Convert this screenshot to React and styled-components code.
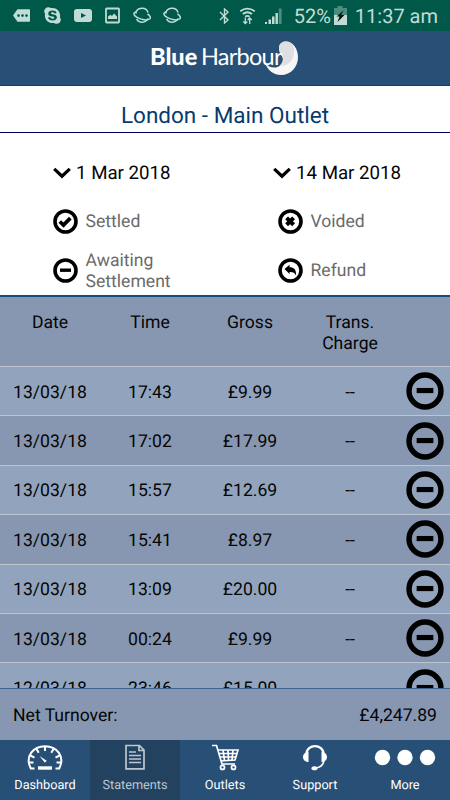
import React from "react";
import styled, { createGlobalStyle } from "styled-components";
import { FaSkype } from "react-icons/fa";

const Global = createGlobalStyle`
  *, *::before, *::after { box-sizing: border-box; }
  body { margin: 0; background: #fff; font-family: Roboto, "Liberation Sans", sans-serif; }
  svg { display: block; flex: none; }
`;

const Screen = styled.div`
  width: 450px;
  height: 800px;
  display: flex;
  flex-direction: column;
  overflow: hidden;
  color: #050505;
  text-rendering: geometricPrecision;
`;

const StatusBar = styled.div`
  height: 31px;
  flex: none;
  background: #005849;
  color: #c0dcd5;
  display: flex;
  align-items: center;
  justify-content: space-between;
  padding: 0 12px 0 13px;
`;

const Notifications = styled.div`
  display: flex;
  align-items: center;
  gap: ${(p) => p.$gap || 0}px;
`;

const StatusText = styled.span`
  font-size: 20px;
  line-height: 31px;
  padding-top: 2px;
  margin-left: ${(p) => p.$left || 0}px;
  white-space: nowrap;
`;

const Brand = styled.header`
  height: 55px;
  flex: none;
  background: #285077;
  border-bottom: 1px solid #153e69;
  display: flex;
  justify-content: center;
  align-items: flex-start;
  color: #fff;
`;

const Logo = styled.div`
  width: 150px;
  height: 54px;
  display: flex;
  padding-top: 10px;
  font-family: Lato, sans-serif;
  font-size: 23.5px;
  line-height: 32px;
  white-space: nowrap;
`;

const LogoBold = styled.span`
  font-weight: 900;
  letter-spacing: 0;
  width: 51px;
`;

const LogoLight = styled.span`
  position: relative;
  z-index: 1;
  letter-spacing: -0.75px;
  width: 75px;
`;

const LogoMark = styled.svg`
  margin: 0 0 0 -12px;
`;

const Title = styled.h1`
  margin: 0;
  height: 47px;
  flex: none;
  border-bottom: 1px solid #00005c;
  color: #063b70;
  font-size: 22.5px;
  font-weight: 400;
  line-height: 61px;
  text-align: center;
`;

const Filters = styled.section`
  height: 162px;
  flex: none;
  display: grid;
  grid-template-columns: 225px 225px;
  grid-template-rows: 64px 49px 49px;
`;

const DatePick = styled.div`
  display: flex;
  align-items: center;
  gap: 5px;
  padding: 15px 0 0 ${(p) => p.$left}px;
  font-size: 18.7px;
  line-height: 22px;
`;

const Legend = styled.div`
  display: flex;
  align-items: center;
  gap: 7.5px;
  padding: 0 0 0 53px;
  color: #6b6b6b;
  font-size: 17.6px;
  line-height: 20.5px;
`;

const LegendText = styled.span`
  max-width: 100px;
  padding-top: 2px;
`;

const Table = styled.section`
  height: 393px;
  flex: none;
  overflow: hidden;
  border-top: 2px solid #154c7b;
  background: #8797b1;
  font-size: 17.6px;
`;

const Row = styled.div`
  display: grid;
  grid-template-columns: 100px 100px 100px 100px 50px;
  height: 49.4px;
  align-items: center;
  text-align: center;
  background: ${(p) => (p.$light ? "#92a4bd" : "#8797b1")};
  border-top: 1px solid #bdc5d0;

  & > svg { margin-left: 6px; }
`;

const HeadRow = styled(Row)`
  height: 69px;
  border-top: 0;
  align-items: start;
  padding-top: 13px;
  line-height: 20.5px;
`;

const Cell = styled.span`
  padding-top: 3px;
`;

const Total = styled.section`
  height: 52px;
  flex: none;
  border-top: 1px solid #3b6391;
  background: #8797b1;
  display: flex;
  align-items: center;
  justify-content: space-between;
  padding: 3px 13px 0;
  font-size: 17.6px;
`;

const Nav = styled.nav`
  height: 60px;
  flex: none;
  display: grid;
  grid-template-columns: repeat(5, 90px);
  background: #285077;
`;

const Tab = styled.div`
  display: flex;
  flex-direction: column;
  align-items: center;
  padding-top: 2px;
  color: ${(p) => (p.$active ? "#bcc6cf" : "#fff")};
  background: ${(p) => (p.$active ? "#23425f" : "transparent")};
`;

const TabLabel = styled.span`
  margin-top: 4.6px;
  font-size: 12.7px;
  line-height: 16px;
`;

const glyphs = {
  check: <path d="M6.8 12.5l3.7 3.6 6.800-7" strokeWidth="3.700" />,
  minus: <path d="M7 12.200h11" strokeWidth="3.400" />,
  cross: <path d="M8.600 8.900l7 6.800M15.600 8.900l-7 6.800" strokeWidth="4.100" />,
  reply: (
    <path
      d="M6.500 11l5.100-4.200v2.500c4.200 0 6.700 1.800 6.500 8.500-1.200-3-2.900-3.900-6.500-3.800v2z"
      fill="#000"
      stroke="none"
    />
  ),
};

const Mark = ({ kind, size = 25 }) => (
  <svg width={size} height={size} viewBox="0 0 25 25" fill="none" stroke="#000">
    <circle cx="12.500" cy="12.500" r="10.500" strokeWidth="3.600" />
    {glyphs[kind]}
  </svg>
);

const Chevron = () => (
  <svg width="18" height="14" viewBox="0 0 18 14" fill="none" stroke="#000" strokeWidth="3.200">
    <path d="M1.200 2.800L9 10.200l7.800-7.400" />
  </svg>
);

const Planet = () => (
  <svg width="18" height="17" viewBox="0 0 18 17" fill="none" stroke="currentColor" strokeWidth="1.500">
    <path d="M2.800 6.600C3.400 0 13.400-.6 15 5.600M3.600 11.800c2.400 4.600 9 4.400 11.400-.3" />
    <path d="M3 4.600C-.3 5.800.3 8.400 4 10.400c4.300 2.400 10 3.400 12.600 1.600 1.600-1.300.4-3.300-2.100-5.200" />
  </svg>
);

const NotificationIcons = () => (
  <Notifications $gap={12}>
    <svg width="18" height="14" viewBox="0 0 18 14">
      <path d="M4.500.300H16.300q.7 0 .7.700v11q0 .7-.7.700H4.500L0 6.500z" fill="currentColor" />
      <g fill="#005849">
        <circle cx="5.500" cy="6.600" r="1.300" />
        <circle cx="9.500" cy="6.600" r="1.300" />
        <circle cx="13.500" cy="6.600" r="1.300" />
      </g>
    </svg>
    <FaSkype size={19} />
    <svg width="18" height="13" viewBox="0 0 18 13">
      <rect width="18" height="13" rx="3" fill="currentColor" />
      <path d="M7 4v5l5-2.500z" fill="#005849" />
    </svg>
    <svg width="17" height="17" viewBox="0 0 17 17" fill="none" stroke="currentColor">
      <rect x="2" y="1.500" width="13" height="14" strokeWidth="1.800" rx="0.700" />
      <path d="M4 12V9.500l2.500-1.800L8 9l2-2.400 3 3V12z" fill="currentColor" stroke="none" />
    </svg>
    <Planet />
    <Planet />
  </Notifications>
);

const SystemIcons = () => (
  <Notifications>
    <svg width="11" height="16" viewBox="0 0 11 16" fill="none" stroke="currentColor" strokeWidth="1.400">
      <path d="M1 4l8 8-3.500 3V1L9 4l-8 8" />
    </svg>
    <svg width="35" height="22" viewBox="-1 0 35 22" fill="none" stroke="currentColor" strokeWidth="1.800">
      <path d="M9.200 6.300q7.200-5.300 14.600 0M11.800 9q4.600-3.500 9.200 0M14.200 11.700q2.200-1.700 4.400 0" />
      <path d="M14.300 12.500v6m-2-2l2 2 2-2M18.700 19v-6m-2 2l2-2 2 2" strokeWidth="1.300" />
    </svg>
    <svg width="19" height="18" viewBox="0 0 19 18" fill="currentColor">
      <path d="M0 15h2v2H0zM3.500 12.500h2.500V17H3.500zM7 9.500h2.500V17H7zM10.500 6h2.400v11h-2.400z" />
      <path d="M13.800 1.500h2.800V17h-2.800z" opacity="0.4" />
    </svg>
    <StatusText $left={10}>52%</StatusText>
    <svg width="16" height="20" viewBox="-2 0 16 20">
      <path d="M4.500 0h5v2H14v7H1V2h3.500z" fill="#4d8b7e" />
      <path d="M1 9h13v10H1z" fill="currentColor" />
      <path d="M10.500 4.500l-7 6h3l-2 5.500 7-7H8z" fill="#09120f" />
    </svg>
    <StatusText $left={8}>11:37 am</StatusText>
  </Notifications>
);

const Dashboard = () => (
  <svg width="36" height="31" viewBox="0 0 36 31" fill="none" stroke="currentColor" strokeWidth="2">
    <path d="M7.500 26.500H3.800C-2.500 14 6.500 4.300 18 4.300s20.500 9.700 14.200 22.200H28.500" />
    <path d="M18 4v5M9.500 7l2.200 3.800M26.500 7l-2.200 3.800M3.300 13.500l4.200 2.200M32.700 13.500l-4.200 2.200M2 20.500h4.500M34 20.500h-4.500" />
    <path d="M11 26h14" strokeWidth="3.400" />
    <path d="M12.500 14l7.200 4.700-1.800 2z" fill="currentColor" stroke="none" />
  </svg>
);

const Statement = () => (
  <svg width="22" height="31" viewBox="0 0 22 31" fill="none" stroke="currentColor" strokeWidth="1.700">
    <path d="M2 3.500h13.500l4.500 4.700v18.600H2zM15 3.500v5h5" />
    <path d="M5 10h7M5 13.500h12M5 17h12M5 20.500h12" strokeWidth="1.300" />
  </svg>
);

const Cart = () => (
  <svg width="30" height="31" viewBox="0 0 30 31" fill="none" stroke="currentColor" strokeWidth="1.700">
    <path d="M2 3.500h4.500L12 22h13M7.500 8h20.500l-3 10-14 1" />
    <path d="M13 8l1.500 10.500M18 8l.5 10M23 8l-1 10M9 11.500h18M10 15h16" />
    <circle cx="12.500" cy="25.400" r="2" />
    <circle cx="23.500" cy="25.400" r="2" />
  </svg>
);

const Headset = () => (
  <svg width="26" height="31" viewBox="0 0 26 31" fill="none" stroke="currentColor">
    <path d="M4.500 12C4.500 1.500 21.500 1.500 21.500 12" strokeWidth="2.400" />
    <path d="M22 18c-.5 5-4 7.500-8.500 8" strokeWidth="1.600" />
    <path d="M6.500 10v10C3 20 1 17.500 1 15s2-5 5.500-5zM19.500 10v10c3.500 0 5.500-2.500 5.500-5s-2-5-5.500-5z" fill="currentColor" stroke="none" />
    <ellipse cx="12.500" cy="26.200" rx="3" ry="2" fill="currentColor" stroke="none" />
  </svg>
);

const More = () => (
  <svg width="62" height="31" viewBox="0 0 62 31" fill="currentColor">
    <circle cx="8.500" cy="15.500" r="7.700" />
    <circle cx="31" cy="15.500" r="7.700" />
    <circle cx="53.500" cy="15.500" r="7.700" />
  </svg>
);

const rows = [
  ["13/03/18", "17:43", "£9.99", "--"],
  ["13/03/18", "17:02", "£17.99", "--"],
  ["13/03/18", "15:57", "£12.69", "--"],
  ["13/03/18", "15:41", "£8.97", "--"],
  ["13/03/18", "13:09", "£20.00", "--"],
  ["13/03/18", "00:24", "£9.99", "--"],
  ["12/03/18", "23:46", "£15.00", "--"],
];

const tabs = [
  ["Dashboard", Dashboard],
  ["Statements", Statement],
  ["Outlets", Cart],
  ["Support", Headset],
  ["More", More],
];

export default function App() {
  return (
    <Screen>
      <Global />
      <StatusBar>
        <NotificationIcons />
        <SystemIcons />
      </StatusBar>
      <Brand>
        <Logo>
          <LogoBold>Blue</LogoBold>
          <LogoLight>Harbour</LogoLight>
          <LogoMark width="36" height="36" viewBox="0 0 36 36">
            <path d="M15 7C15 2 19 .5 22 .5 29 .5 34 8 34 16c0 10-7 18-17 18C10 34 4 30 1 22c4 5 11 6 15 2.500 3-3 3.500-6 2.500-8.500C17 14 15 11 15 7z" fill="#f6f6f6" />
            <path d="M15 7C15 2 19 .5 22 .5c6 0 9 6 8 12-1 8-7 13-14 12 3-3 3.500-6 2.500-8.500C17 14 15 11 15 7z" fill="#dedfe2" />
          </LogoMark>
        </Logo>
      </Brand>
      <Title>London - Main Outlet</Title>
      <Filters>
        <DatePick $left={53}><Chevron />1 Mar 2018</DatePick>
        <DatePick $left={48}><Chevron />14 Mar 2018</DatePick>
        <Legend><Mark kind="check" /><LegendText>Settled</LegendText></Legend>
        <Legend><Mark kind="cross" /><LegendText>Voided</LegendText></Legend>
        <Legend><Mark kind="minus" /><LegendText>Awaiting Settlement</LegendText></Legend>
        <Legend><Mark kind="reply" /><LegendText>Refund</LegendText></Legend>
      </Filters>
      <Table>
        <HeadRow>
          <Cell>Date</Cell>
          <Cell>Time</Cell>
          <Cell>Gross</Cell>
          <Cell>Trans.<br />Charge</Cell>
        </HeadRow>
        {rows.map((row, i) => (
          <Row key={i} $light={i % 2 === 0}>
            {row.map((text, j) => <Cell key={j}>{text}</Cell>)}
            <Mark kind="minus" size={38} />
          </Row>
        ))}
      </Table>
      <Total><span>Net Turnover:</span><span>£4,247.89</span></Total>
      <Nav>
        {tabs.map(([label, Icon], i) => (
          <Tab key={label} $active={i === 1}>
            <Icon />
            <TabLabel>{label}</TabLabel>
          </Tab>
        ))}
      </Nav>
    </Screen>
  );
}
